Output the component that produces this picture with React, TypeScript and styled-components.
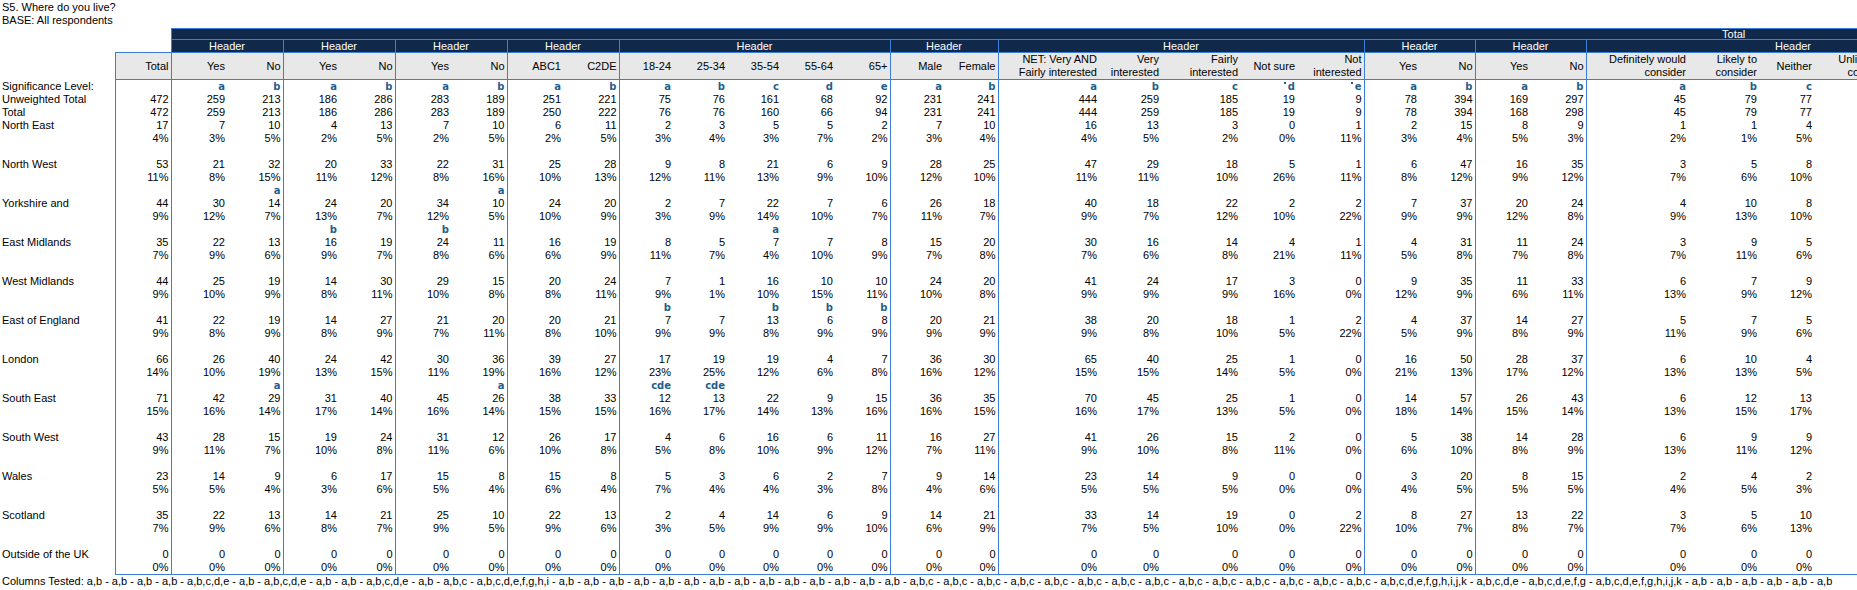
import React from 'react'
import styled, { createGlobalStyle } from 'styled-components'

const NAVY = '#10294a'
const RULE = '#3a7fd5'
const SIG = '#1f5f8c'
const GREY = '#e8e8e8'

const LABEL_W = 115
const TOTAL_W = 56
const FILLER_W = 1296

interface Column {
  label: string[]
  w: number
  lowBase?: boolean
}

interface Group {
  title: string
  cols: Column[]
}

const yesNo = (a = 56, b = 56): Column[] => [
  { label: ['Yes'], w: a },
  { label: ['No'], w: b }
]

const groups: Group[] = [
  { title: 'Header', cols: yesNo() },
  { title: 'Header', cols: yesNo() },
  { title: 'Header', cols: yesNo() },
  { title: 'Header', cols: [{ label: ['ABC1'], w: 56 }, { label: ['C2DE'], w: 56 }] },
  {
    title: 'Header',
    cols: [
      { label: ['18-24'], w: 54 },
      { label: ['25-34'], w: 54 },
      { label: ['35-54'], w: 54 },
      { label: ['55-64'], w: 54 },
      { label: ['65+'], w: 55 }
    ]
  },
  { title: 'Header', cols: [{ label: ['Male'], w: 54 }, { label: ['Female'], w: 54 }] },
  {
    title: 'Header',
    cols: [
      { label: ['NET: Very AND', 'Fairly interested'], w: 101 },
      { label: ['Very', 'interested'], w: 62 },
      { label: ['Fairly', 'interested'], w: 79 },
      { label: ['Not sure'], w: 57, lowBase: true },
      { label: ['Not', 'interested'], w: 67, lowBase: true }
    ]
  },
  { title: 'Header', cols: yesNo(55, 56) },
  { title: 'Header', cols: yesNo(55, 56) },
  {
    title: 'Header',
    cols: [
      { label: ['Definitely would', 'consider'], w: 102 },
      { label: ['Likely to', 'consider'], w: 71 },
      { label: ['Neither'], w: 55 },
      { label: ['Unlikely to', 'consider'], w: 77 },
      { label: ['Definitely would not', 'consider'], w: 109 }
    ]
  }
]

const LETTERS = 'abcdefghijk'

// flat list of data columns after Total; '^' marks a low-base column letter
const flatCols = groups.flatMap(g =>
  g.cols.map((c, i) => ({ ...c, start: i === 0, letter: (c.lowBase ? '^' : '') + LETTERS[i] }))
)
const dataCount = flatCols.length + 1
const tableWidth = LABEL_W + TOTAL_W + flatCols.reduce((s, c) => s + c.w, 0) + FILLER_W

type Counts = number[]

const unweighted: Counts = [472, 259, 213, 186, 286, 283, 189, 251, 221, 75, 76, 161, 68, 92, 231, 241, 444, 259, 185, 19, 9, 78, 394, 169, 297, 45, 79, 77]
const weighted: Counts = [472, 259, 213, 186, 286, 283, 189, 250, 222, 76, 76, 160, 66, 94, 231, 241, 444, 259, 185, 19, 9, 78, 394, 168, 298, 45, 79, 77]

interface Region {
  name: string
  n: Counts
  pct: Counts
  marks?: Record<number, string>
}

const regions: Region[] = [
  {
    name: 'North East',
    n: [17, 7, 10, 4, 13, 7, 10, 6, 11, 2, 3, 5, 5, 2, 7, 10, 16, 13, 3, 0, 1, 2, 15, 8, 9, 1, 1, 4],
    pct: [4, 3, 5, 2, 5, 2, 5, 2, 5, 3, 4, 3, 7, 2, 3, 4, 4, 5, 2, 0, 11, 3, 4, 5, 3, 2, 1, 5]
  },
  {
    name: 'North West',
    n: [53, 21, 32, 20, 33, 22, 31, 25, 28, 9, 8, 21, 6, 9, 28, 25, 47, 29, 18, 5, 1, 6, 47, 16, 35, 3, 5, 8],
    pct: [11, 8, 15, 11, 12, 8, 16, 10, 13, 12, 11, 13, 9, 10, 12, 10, 11, 11, 10, 26, 11, 8, 12, 9, 12, 7, 6, 10]
  },
  {
    name: 'Yorkshire and',
    marks: { 2: 'a', 6: 'a' },
    n: [44, 30, 14, 24, 20, 34, 10, 24, 20, 2, 7, 22, 7, 6, 26, 18, 40, 18, 22, 2, 2, 7, 37, 20, 24, 4, 10, 8],
    pct: [9, 12, 7, 13, 7, 12, 5, 10, 9, 3, 9, 14, 10, 7, 11, 7, 9, 7, 12, 10, 22, 9, 9, 12, 8, 9, 13, 10]
  },
  {
    name: 'East Midlands',
    marks: { 3: 'b', 5: 'b', 11: 'a' },
    n: [35, 22, 13, 16, 19, 24, 11, 16, 19, 8, 5, 7, 7, 8, 15, 20, 30, 16, 14, 4, 1, 4, 31, 11, 24, 3, 9, 5],
    pct: [7, 9, 6, 9, 7, 8, 6, 6, 9, 11, 7, 4, 10, 9, 7, 8, 7, 6, 8, 21, 11, 5, 8, 7, 8, 7, 11, 6]
  },
  {
    name: 'West Midlands',
    n: [44, 25, 19, 14, 30, 29, 15, 20, 24, 7, 1, 16, 10, 10, 24, 20, 41, 24, 17, 3, 0, 9, 35, 11, 33, 6, 7, 9],
    pct: [9, 10, 9, 8, 11, 10, 8, 8, 11, 9, 1, 10, 15, 11, 10, 8, 9, 9, 9, 16, 0, 12, 9, 6, 11, 13, 9, 12]
  },
  {
    name: 'East of England',
    marks: { 9: 'b', 11: 'b', 12: 'b', 13: 'b' },
    n: [41, 22, 19, 14, 27, 21, 20, 20, 21, 7, 7, 13, 6, 8, 20, 21, 38, 20, 18, 1, 2, 4, 37, 14, 27, 5, 7, 5],
    pct: [9, 8, 9, 8, 9, 7, 11, 8, 10, 9, 9, 8, 9, 9, 9, 9, 9, 8, 10, 5, 22, 5, 9, 8, 9, 11, 9, 6]
  },
  {
    name: 'London',
    n: [66, 26, 40, 24, 42, 30, 36, 39, 27, 17, 19, 19, 4, 7, 36, 30, 65, 40, 25, 1, 0, 16, 50, 28, 37, 6, 10, 4],
    pct: [14, 10, 19, 13, 15, 11, 19, 16, 12, 23, 25, 12, 6, 8, 16, 12, 15, 15, 14, 5, 0, 21, 13, 17, 12, 13, 13, 5]
  },
  {
    name: 'South East',
    marks: { 2: 'a', 6: 'a', 9: 'cde', 10: 'cde' },
    n: [71, 42, 29, 31, 40, 45, 26, 38, 33, 12, 13, 22, 9, 15, 36, 35, 70, 45, 25, 1, 0, 14, 57, 26, 43, 6, 12, 13],
    pct: [15, 16, 14, 17, 14, 16, 14, 15, 15, 16, 17, 14, 13, 16, 16, 15, 16, 17, 13, 5, 0, 18, 14, 15, 14, 13, 15, 17]
  },
  {
    name: 'South West',
    n: [43, 28, 15, 19, 24, 31, 12, 26, 17, 4, 6, 16, 6, 11, 16, 27, 41, 26, 15, 2, 0, 5, 38, 14, 28, 6, 9, 9],
    pct: [9, 11, 7, 10, 8, 11, 6, 10, 8, 5, 8, 10, 9, 12, 7, 11, 9, 10, 8, 11, 0, 6, 10, 8, 9, 13, 11, 12]
  },
  {
    name: 'Wales',
    n: [23, 14, 9, 6, 17, 15, 8, 15, 8, 5, 3, 6, 2, 7, 9, 14, 23, 14, 9, 0, 0, 3, 20, 8, 15, 2, 4, 2],
    pct: [5, 5, 4, 3, 6, 5, 4, 6, 4, 7, 4, 4, 3, 8, 4, 6, 5, 5, 5, 0, 0, 4, 5, 5, 5, 4, 5, 3]
  },
  {
    name: 'Scotland',
    n: [35, 22, 13, 14, 21, 25, 10, 22, 13, 2, 4, 14, 6, 9, 14, 21, 33, 14, 19, 0, 2, 8, 27, 13, 22, 3, 5, 10],
    pct: [7, 9, 6, 8, 7, 9, 5, 9, 6, 3, 5, 9, 9, 10, 6, 9, 7, 5, 10, 0, 22, 10, 7, 8, 7, 7, 6, 13]
  },
  {
    name: 'Outside of the UK',
    n: Array(28).fill(0),
    pct: Array(28).fill(0)
  }
]

// the last two answer columns sit past the right edge; split what is left of the row
const split = (n: Counts): Counts => {
  const rest = n[0] - n[25] - n[26] - n[27]
  const unlikely = Math.round(rest * 0.45)
  return [...n, unlikely, rest - unlikely]
}
const baseW = split(weighted)
const pctOf = (n: Counts, pct: Counts): Counts => {
  const full = split(n)
  return [...pct, ...full.slice(28).map((v, i) => Math.round((v / baseW[28 + i]) * 100))]
}

interface BodyRow {
  kind: 'sig' | 'num'
  label?: string
  cells: string[]
}

const blank = () => Array(dataCount).fill('')

const bodyRows: BodyRow[] = [
  { kind: 'sig', label: 'Significance Level:', cells: ['', ...flatCols.map(c => c.letter)] },
  { kind: 'num', label: 'Unweighted Total', cells: split(unweighted).map(String) },
  { kind: 'num', label: 'Total', cells: baseW.map(String) }
]

regions.forEach((r, i) => {
  if (i > 0) {
    const cells = blank()
    Object.entries(r.marks ?? {}).forEach(([k, v]) => (cells[Number(k)] = v))
    bodyRows.push({ kind: 'sig', cells })
  }
  bodyRows.push({ kind: 'num', label: r.name, cells: split(r.n).map(String) })
  bodyRows.push({ kind: 'num', cells: pctOf(r.n, r.pct).map(v => `${v}%`) })
})

const footer =
  'Columns Tested: a,b - a,b - a,b - a,b - a,b,c,d,e - a,b - a,b,c,d,e - a,b - a,b - a,b,c,d,e - a,b - a,b,c - a,b,c,d,e,f,g,h,i - ' +
  'a,b - '.repeat(14) +
  'a,b,c - '.repeat(14) +
  'a,b,c,d,e,f,g,h,i,j,k - a,b,c,d,e - a,b,c,d,e,f,g - a,b,c,d,e,f,g,h,i,j,k - a,b - a,b - a,b - a,b - a,b - a,b'

const GlobalStyle = createGlobalStyle`
  html, body {
    margin: 0;
    padding: 0;
    background: #fff;
    overflow: hidden;
  }
  body {
    font-family: 'Liberation Sans', Arial, sans-serif;
    font-size: 11px;
    color: #000;
  }
`

const Page = styled.div`
  width: 1857px;
  height: 590px;
  overflow: hidden;
`

const Title = styled.div`
  padding: 1px 0 0 2px;
  line-height: 13px;
  white-space: nowrap;
`

const Table = styled.table<{ $w: number }>`
  border-collapse: collapse;
  table-layout: fixed;
  width: ${({ $w }) => $w}px;
  margin-top: 1px;
`

const Col = styled.col<{ $w: number }>`
  width: ${({ $w }) => $w}px;
`

const Empty = styled.td`
  padding: 0;
  border: none;
`

const BandCell = styled.td`
  height: 10px;
  padding: 0;
  line-height: 10px;
  background: ${NAVY};
  color: #fff;
  text-align: center;
  border: 1px solid ${RULE};
`

const GroupCell = styled.td`
  height: 12px;
  padding: 0;
  line-height: 12px;
  background: ${NAVY};
  color: #fff;
  text-align: center;
  white-space: nowrap;
  border: 1px solid ${RULE};
`

const HeadCell = styled.td<{ $start: boolean }>`
  height: 26px;
  padding: 0 2px 0 0;
  line-height: 13px;
  background: ${GREY};
  text-align: right;
  vertical-align: middle;
  white-space: nowrap;
  overflow: hidden;
  border-top: 1px solid ${RULE};
  border-bottom: 1px solid ${RULE};
  border-left: ${({ $start }) => ($start ? `1px solid ${RULE}` : 'none')};
`

const RowLabel = styled.td`
  height: 13px;
  padding: 0 0 0 2px;
  line-height: 13px;
  white-space: nowrap;
  overflow: hidden;
`

const ValueCell = styled.td<{ $start: boolean; $last: boolean; $sig: boolean }>`
  height: 13px;
  padding: 0 2px 0 0;
  line-height: 13px;
  text-align: right;
  white-space: nowrap;
  overflow: hidden;
  font-family: ${({ $sig }) => ($sig ? "'DejaVu Sans', Verdana, sans-serif" : 'inherit')};
  font-size: ${({ $sig }) => ($sig ? '10px' : '11px')};
  font-weight: ${({ $sig }) => ($sig ? 700 : 400)};
  color: ${({ $sig }) => ($sig ? SIG : '#000')};
  border-left: ${({ $start }) => ($start ? `1px solid ${RULE}` : 'none')};
  border-bottom: ${({ $last }) => ($last ? `1px solid ${RULE}` : 'none')};
`

// small raised square that flags a low-base column letter
const LowBaseDot = styled.span`
  display: inline-block;
  width: 2px;
  height: 2px;
  margin-right: 2px;
  background: ${SIG};
  vertical-align: 6px;
`

const Footer = styled.div`
  padding-left: 2px;
  line-height: 13px;
  white-space: nowrap;
`

const Lines: React.FC<{ lines: string[] }> = ({ lines }) => (
  <>
    {lines.map((l, i) => (
      <React.Fragment key={i}>
        {i > 0 && <br />}
        {l}
      </React.Fragment>
    ))}
  </>
)

const Letter: React.FC<{ value: string }> = ({ value }) =>
  value.startsWith('^') ? (
    <>
      <LowBaseDot />
      {value.slice(1)}
    </>
  ) : (
    <>{value}</>
  )

export default function App() {
  const startFlags = [true, ...flatCols.map(c => c.start)]
  return (
    <Page>
      <GlobalStyle />
      <Title>
        S5. Where do you live?
        <br />
        BASE: All respondents
      </Title>
      <Table $w={tableWidth}>
        <colgroup>
          <Col $w={LABEL_W} />
          <Col $w={TOTAL_W} />
          {flatCols.map((c, i) => (
            <Col key={i} $w={c.w} />
          ))}
          <Col $w={FILLER_W} />
        </colgroup>
        <thead>
          <tr>
            <Empty colSpan={2} />
            <BandCell colSpan={flatCols.length + 1}>Total</BandCell>
          </tr>
          <tr>
            <Empty colSpan={2} />
            {groups.map((g, i) => (
              <GroupCell key={i} colSpan={g.cols.length}>
                {g.title}
              </GroupCell>
            ))}
            <GroupCell>Header</GroupCell>
          </tr>
          <tr>
            <Empty />
            <HeadCell $start>Total</HeadCell>
            {flatCols.map((c, i) => (
              <HeadCell key={i} $start={c.start}>
                <Lines lines={c.label} />
              </HeadCell>
            ))}
            <HeadCell $start />
          </tr>
        </thead>
        <tbody>
          {bodyRows.map((row, r) => {
            const last = r === bodyRows.length - 1
            const sig = row.kind === 'sig'
            return (
              <tr key={r}>
                <RowLabel>{row.label ?? ''}</RowLabel>
                {row.cells.map((v, c) => (
                  <ValueCell key={c} $start={startFlags[c]} $last={last} $sig={sig}>
                    {sig ? <Letter value={v} /> : v}
                  </ValueCell>
                ))}
                <ValueCell $start $last={last} $sig={false} />
              </tr>
            )
          })}
        </tbody>
      </Table>
      <Footer>{footer}</Footer>
    </Page>
  )
}
